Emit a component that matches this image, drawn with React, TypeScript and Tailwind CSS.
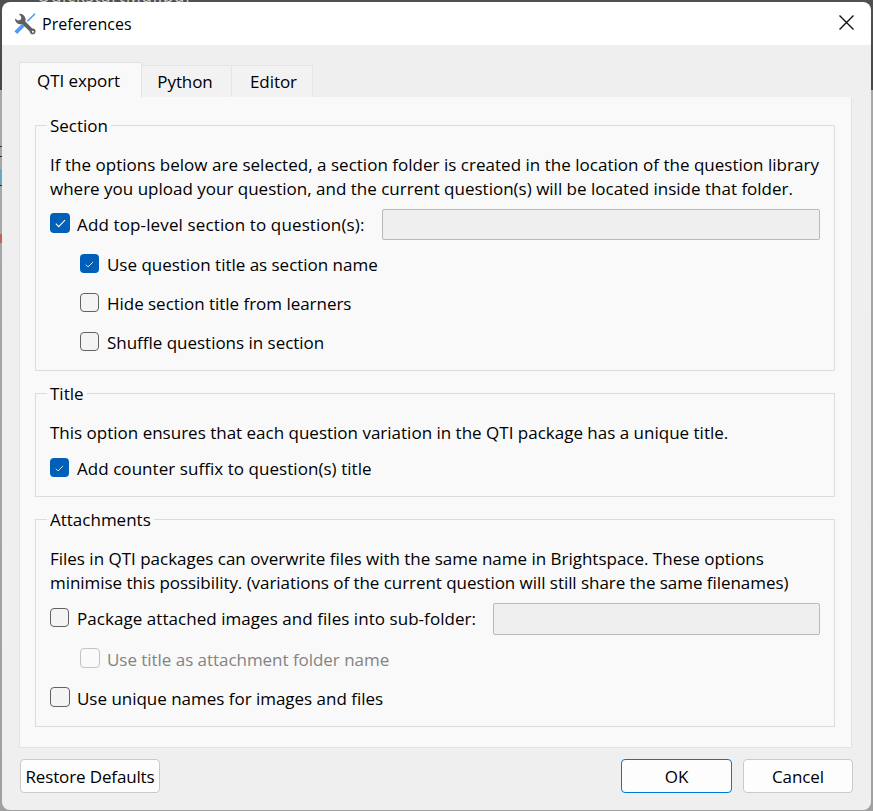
import type { ReactNode } from "react";

function CheckBox({ checked, disabled, size = "w-[19px] h-[19px]" }: { checked?: boolean; disabled?: boolean; size?: string }) {
  if (checked) {
    const large = size.includes("20px");
    return (
      <span className={`${size} flex shrink-0 items-center justify-center rounded-[4px] bg-[#005fb8]`}>
        <svg className="mt-px" width={large ? 11 : 9} height={large ? 9 : 7} viewBox="0 0 11 9" fill="none" stroke="#fff" strokeWidth="1.1">
          <path d="M.8 4.7 3.7 7.6 10 1.2" />
        </svg>
      </span>
    );
  }
  return (
    <span
      className={`${size} shrink-0 rounded-[4px] border ${disabled ? "border-[#c4c4c4] bg-[#fafafa]" : "border-[#626262] bg-[#f4f4f4]"}`}
    />
  );
}

function Group({ title, className, children }: { title: string; className: string; children: ReactNode }) {
  return (
    <section className={`relative border border-[#dcdcdc] px-[14px] ${className}`}>
      <h2 className="absolute -top-[12px] left-[11px] bg-[#f9f9f9] px-[3px] leading-6">{title}</h2>
      {children}
    </section>
  );
}

function Tools() {
  return (
    <svg width="22" height="22" viewBox="0 0 22 22" fill="none">
      <path d="M21 .8 13.4 8.2" stroke="#4a9cf8" strokeWidth="1.6" />
      <path d="M9.4 12 1.8 19.6" stroke="#4a9cf8" strokeWidth="3.8" />
      <path d="M8 8 18.4 18.4" stroke="#606060" strokeWidth="4" />
      <circle cx="18.7" cy="18.4" r="2.8" fill="#606060" />
      <path d="M5 .9A5.7 5.7 0 0 1 11.2 8.6L8.7 11A5.7 5.7 0 0 1 1 5.4L3.9 7.5 6.3 7.1 7.4 5.2 7 3.4Z" fill="#606060" />
      <circle cx="18.9" cy="18.7" r="1" fill="#fff" />
    </svg>
  );
}

export default function App() {
  return (
    <div className="relative h-[811px] w-[873px] overflow-hidden bg-[linear-gradient(to_bottom,#505050_0,#484848_90px,#a8a8a8_90px,#a0a0a0_811px)] font-['Open_Sans','Noto_Sans',sans-serif] text-[17px] leading-6 whitespace-nowrap text-black">
      <div className="absolute top-[-16px] left-[37px] text-[17px] leading-6 tracking-[0.7px] text-[#d0d0d0]">QuickstartMdl.pdf</div>
      <div className="absolute top-[146px] left-0 h-px w-[2px] bg-[#333]" />
      <div className="absolute top-[156px] left-0 h-px w-[2px] bg-[#222]" />
      <div className="absolute top-[169px] left-0 h-4 w-[2px] bg-[#6ca9b8]" />
      <div className="absolute top-[185px] left-0 h-px w-[2px] bg-[#1d2b50]" />
      <div className="absolute top-[234px] left-0 h-[9px] w-[2px] bg-[#b86460]" />

      <div className="relative mx-[2px] flex h-full flex-col pt-[2px] pb-px">
        <header className="flex h-[43px] shrink-0 items-center rounded-t-[8px] bg-white pr-[17px] pl-[12px]">
          <Tools />
          <h1 className="ml-[6px] text-[16px] tracking-[0.05px]">Preferences</h1>
          <svg className="mb-[2px] ml-auto" width="15" height="15" viewBox="0 0 15 15" stroke="#111" strokeWidth="1.4">
            <path d="M.5.5l14 14M14.5.5l-14 14" />
          </svg>
        </header>

        <main className="flex grow flex-col rounded-b-[8px] bg-[#efefef] pt-[17px] pr-[18px] pl-[17px]">
          <nav className="flex h-[35px] shrink-0 items-end">
            <div className="relative z-10 mb-[-1px] flex h-[36px] w-[123px] justify-center border border-b-0 border-[#e3e3e3] bg-[#f9f9f9] pt-[6px] pr-[4px] tracking-[-0.08px]">QTI export</div>
            <div className="flex h-[32px] w-[90px] justify-center border-t border-r border-[#e5e5e5] bg-[#f2f2f2] pt-[4px] pr-[3px] tracking-[-0.1px]">Python</div>
            <div className="flex h-[32px] w-[81px] justify-center border-t border-r border-[#e5e5e5] bg-[#f2f2f2] pt-[4px] pl-[3px] tracking-[-0.06px]">Editor</div>
          </nav>

          <div className="mr-px flex h-[651px] shrink-0 flex-col border border-t-0 border-[#e3e3e3] bg-[#f9f9f9] pt-[28px] pr-[16px] pl-[15px]">
            <Group title="Section" className="h-[246px] pt-[27px]">
              <p className="tracking-[0.02px]">If the options below are selected, a section folder is created in the location of the question library</p>
              <p>where you upload your question, and the current question(s) will be located inside that folder.</p>
              <div className="mt-[8px] flex h-[31px]">
                <div className="mt-[4px]"><CheckBox checked size="w-[20px] h-[20px]" /></div>
                <span className="mt-[4px] ml-[7px] w-[305px] tracking-[0.13px]">Add top-level section to question(s):</span>
                <div className="grow rounded-[2px] border border-[#b9b9b9] bg-[#efefef]" />
              </div>
              <div className="mt-[13px] ml-[30px] flex h-[39px] gap-[8px]">
                <div className="mt-px"><CheckBox checked /></div>
                <span className="tracking-[-0.02px]">Use question title as section name</span>
              </div>
              <div className="ml-[30px] flex h-[39px] gap-[8px]">
                <div className="mt-px flex"><CheckBox /></div>
                <span className="tracking-[-0.03px]">Hide section title from learners</span>
              </div>
              <div className="ml-[30px] flex h-[24px] gap-[8px]">
                <div className="mt-px flex"><CheckBox /></div>
                <span className="tracking-[-0.02px]">Shuffle questions in section</span>
              </div>
            </Group>

            <Group title="Title" className="mt-[22px] h-[104px] pt-[27px]">
              <p>This option ensures that each question variation in the QTI package has a unique title.</p>
              <div className="mt-[12px] flex gap-[8px]">
                <div className="mt-px"><CheckBox checked /></div>
                <span className="tracking-[0.05px]">Add counter suffix to question(s) title</span>
              </div>
            </Group>

            <Group title="Attachments" className="mt-[22px] h-[208px] pt-[27px]">
              <p className="tracking-[-0.01px]">Files in QTI packages can overwrite files with the same name in Brightspace. These options</p>
              <p className="tracking-[-0.05px]">minimise this possibility. (variations of the current question will still share the same filenames)</p>
              <div className="mt-[8px] flex h-[32px]">
                <div className="mt-[5px] flex h-[19px]"><CheckBox /></div>
                <span className="mt-[4px] ml-[8px] w-[416px] tracking-[0.05px]">Package attached images and files into sub-folder:</span>
                <div className="grow rounded-[2px] border border-[#b9b9b9] bg-[#efefef]" />
              </div>
              <div className="mt-[13px] ml-[30px] flex h-[39px] gap-[7px]">
                <div className="flex"><CheckBox disabled size="w-[20px] h-[20px]" /></div>
                <span className="tracking-[-0.04px] text-[#838383]">Use title as attachment folder name</span>
              </div>
              <div className="flex h-[24px] gap-[7px]">
                <div className="flex"><CheckBox size="w-[20px] h-[20px]" /></div>
                <span className="tracking-[-0.02px]">Use unique names for images and files</span>
              </div>
            </Group>
          </div>

          <footer className="mt-[11px] flex h-[34px] shrink-0">
            <button className="ml-px w-[140px] rounded-[4px] border border-[#cacaca] bg-[#fdfdfd] pt-px tracking-[-0.14px]">Restore Defaults</button>
            <button className="ml-auto w-[111px] rounded-[4px] border border-[#0078d4] bg-[#fdfdfd] pt-px">OK</button>
            <button className="ml-[11px] w-[110px] rounded-[4px] border border-[#cacaca] bg-[#fdfdfd] pt-px tracking-[-0.09px]">Cancel</button>
          </footer>
        </main>
      </div>
    </div>
  );
}
